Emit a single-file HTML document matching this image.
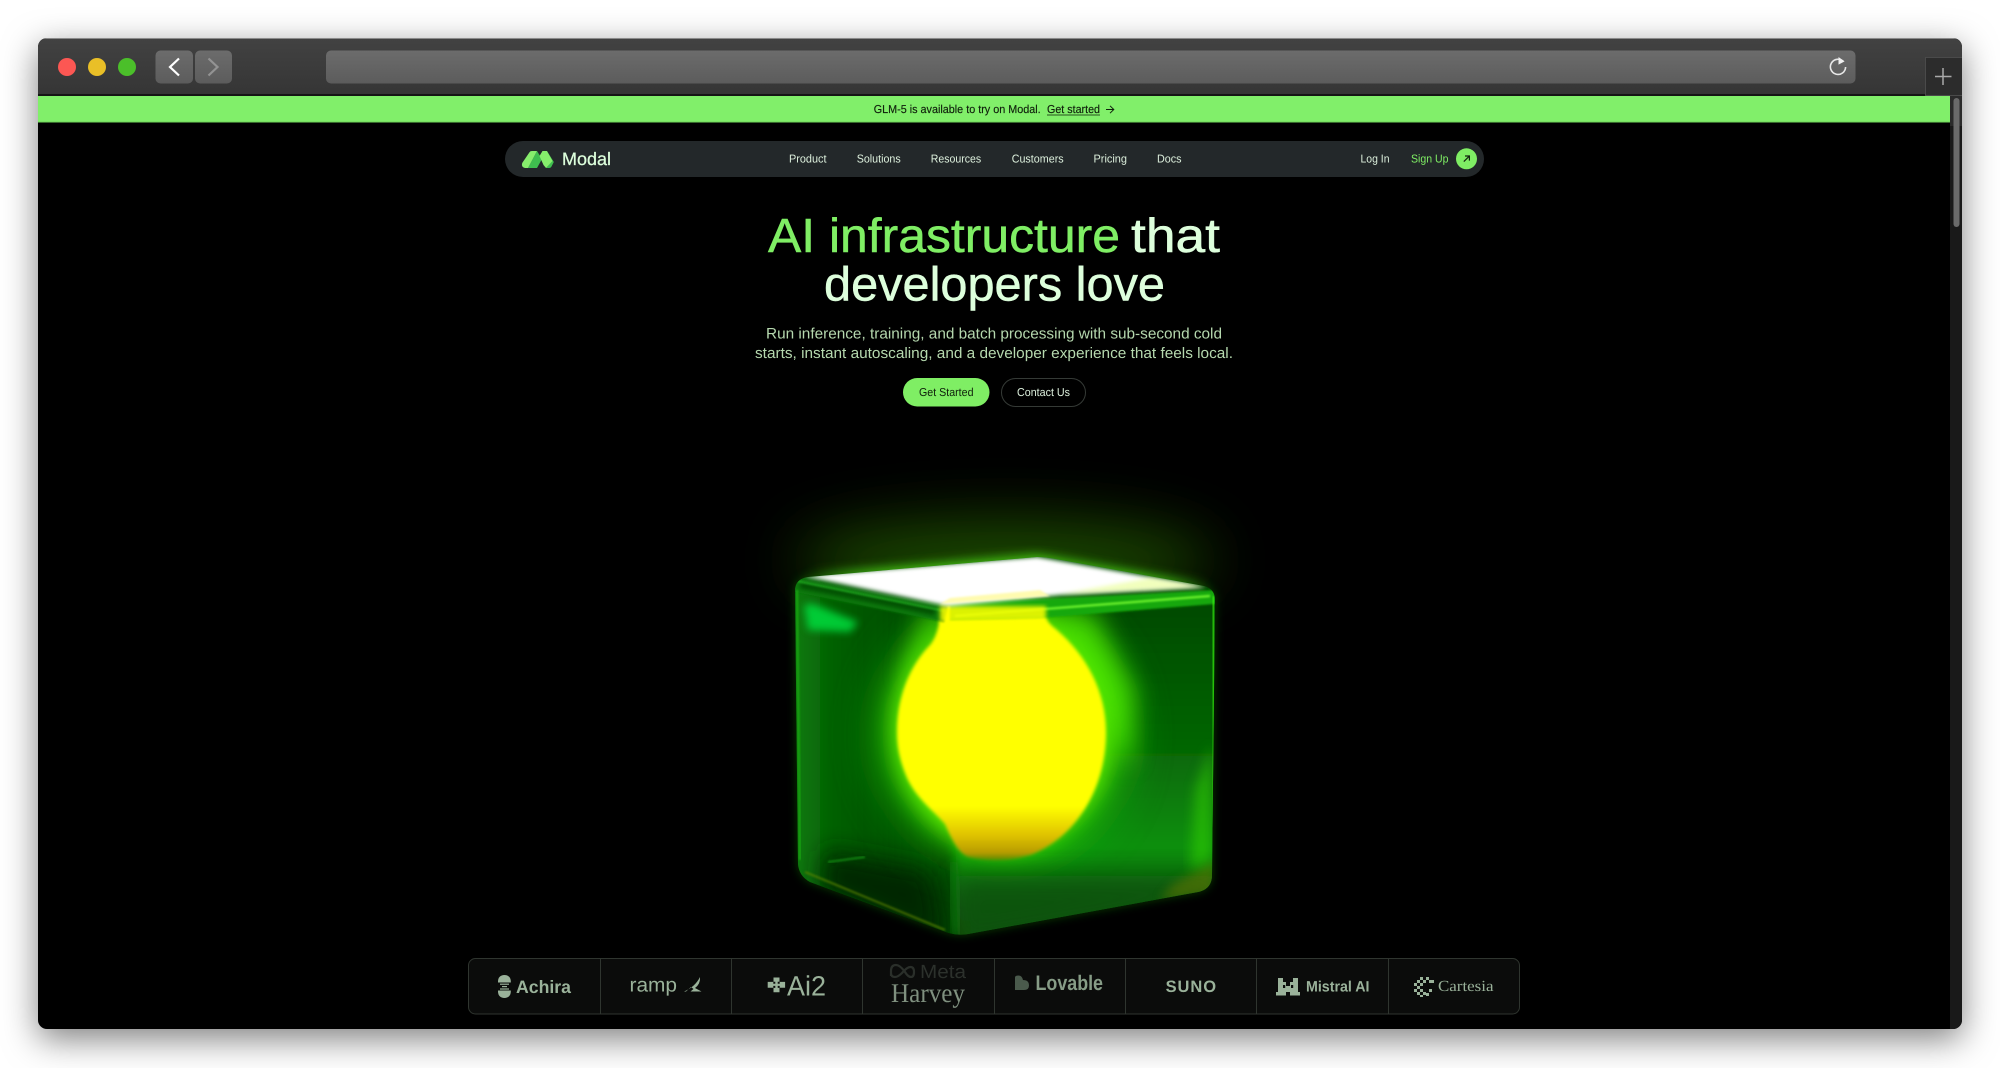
<!DOCTYPE html>
<html lang="en">
<head>
<meta charset="utf-8">
<title>Modal</title>
<style>
html,body{margin:0;padding:0;width:2000px;height:1068px;overflow:hidden;background:#fff}
#win{position:absolute;left:38px;top:38px;width:1924px;height:991px;border-radius:9px;background:#000;box-shadow:0 10px 34px rgba(0,0,0,.5)}
svg{position:absolute;left:0;top:0}
text{font-family:"Liberation Sans",sans-serif;text-rendering:geometricPrecision}
.serif{font-family:"Liberation Serif",serif}
</style>
</head>
<body>
<div id="win"></div>
<svg width="2000" height="1068" viewBox="0 0 2000 1068" xmlns="http://www.w3.org/2000/svg">
<defs>
<clipPath id="winclip"><rect x="38" y="38" width="1924" height="991" rx="9"/></clipPath>
<clipPath id="cube"><path id="sil" d="M795,591Q795,579 808,577L1037,557Q1046,557 1056,559L1204,586Q1215,589 1215,600L1212,875Q1212,889 1198,892L968,934Q957,936 946,932L810,882Q799,876 798,864Z"/></clipPath>
<linearGradient id="bar" x1="0" y1="0" x2="0" y2="1"><stop offset="0" stop-color="#424242"/><stop offset="1" stop-color="#353535"/></linearGradient>
<linearGradient id="btn" x1="0" y1="0" x2="0" y2="1"><stop offset="0" stop-color="#6c6c6c"/><stop offset="1" stop-color="#5c5c5c"/></linearGradient>
<linearGradient id="lf" x1="0" y1="0" x2="1" y2="0"><stop offset="0" stop-color="#0b840b"/><stop offset=".3" stop-color="#056005"/><stop offset="1" stop-color="#033c03"/></linearGradient>
<linearGradient id="rf" x1="0" y1="0" x2="0" y2="1"><stop offset="0" stop-color="#034603"/><stop offset=".45" stop-color="#066606"/><stop offset=".72" stop-color="#0f900b"/><stop offset=".88" stop-color="#095c07"/><stop offset="1" stop-color="#064a06"/></linearGradient>
<linearGradient id="yel" x1="0" y1="0" x2="0" y2="1"><stop offset="0" stop-color="#ffff00"/><stop offset=".79" stop-color="#ffff00"/><stop offset=".9" stop-color="#e0c400"/><stop offset=".97" stop-color="#b89c00"/><stop offset="1" stop-color="#5a8a00"/></linearGradient>
<filter id="b1" x="-20%" y="-20%" width="140%" height="140%"><feGaussianBlur stdDeviation="1"/></filter>
<filter id="b15" x="-20%" y="-20%" width="140%" height="140%"><feGaussianBlur stdDeviation="1.6"/></filter>
<filter id="b2" x="-20%" y="-20%" width="140%" height="140%"><feGaussianBlur stdDeviation="2.2"/></filter>
<filter id="b4" x="-30%" y="-60%" width="160%" height="220%"><feGaussianBlur stdDeviation="4"/></filter>
<filter id="b5" x="-40%" y="-40%" width="180%" height="180%"><feGaussianBlur stdDeviation="5"/></filter>
<filter id="b7" x="-30%" y="-30%" width="160%" height="160%"><feGaussianBlur stdDeviation="6"/></filter>
<filter id="b12" x="-60%" y="-60%" width="220%" height="220%"><feGaussianBlur stdDeviation="12"/></filter>
<filter id="b25" x="-80%" y="-80%" width="260%" height="260%"><feGaussianBlur stdDeviation="25"/></filter>
<filter id="b35" x="-80%" y="-150%" width="260%" height="400%"><feGaussianBlur stdDeviation="30"/></filter>
</defs>

<g clip-path="url(#winclip)">
<!-- toolbar -->
<rect x="38" y="38" width="1924" height="57" fill="url(#bar)"/>
<rect x="38" y="38" width="1924" height="1" fill="#8b8b8b"/>
<rect x="38" y="94" width="1924" height="2" fill="#151515"/>
<circle cx="67" cy="67" r="9" fill="#fc5753"/>
<circle cx="97" cy="67" r="9" fill="#e9bf27"/>
<circle cx="127" cy="67" r="9" fill="#4bbf2a"/>
<rect x="155.5" y="50.5" width="37.5" height="33" rx="5" fill="url(#btn)"/>
<rect x="195" y="50.5" width="37" height="33" rx="5" fill="url(#btn)"/>
<path d="M179,58.5L170,67L179,75.5" fill="none" stroke="#fff" stroke-width="2.2"/>
<path d="M208.5,58.5L217.5,67L208.5,75.5" fill="none" stroke="#939393" stroke-width="2.2"/>
<rect x="326" y="50.5" width="1529.5" height="33" rx="5" fill="url(#btn)"/>
<path d="M1843.5,61.6A7.6,7.6 0 1 0 1845.6,67" fill="none" stroke="#e6e6e6" stroke-width="1.6"/>
<path d="M1838.5,57L1844.6,61.4L1838.5,64.6Z" fill="#f0f0f0"/>
<rect x="1925.5" y="57.5" width="37" height="38" fill="#2c2c2c" stroke="#4a4a4a"/>
<path d="M1943,68V85M1935,76.5H1951.5" stroke="#a9a9a9" stroke-width="1.5" fill="none"/>

<!-- scrollbar -->
<rect x="1950" y="96" width="12" height="933" fill="#191919"/>
<rect x="1950" y="96" width="12" height="30" fill="#2a2a2a"/>
<rect x="1953.5" y="98" width="6" height="129" rx="3" fill="#6a6a6a"/>

<!-- banner -->
<rect x="38" y="96" width="1912" height="26.5" fill="#81ef6a"/>
<rect x="38" y="121.5" width="1912" height="1" fill="#6fd65a"/>
<text x="873.7" y="113" font-size="11.5" fill="#10200c" stroke="#10200c" stroke-width=".15" textLength="167" lengthAdjust="spacingAndGlyphs">GLM-5 is available to try on Modal.</text>
<text x="1047" y="113" font-size="11.5" fill="#10200c" stroke="#10200c" stroke-width=".15" textLength="53" lengthAdjust="spacingAndGlyphs">Get started</text>
<rect x="1047" y="114.5" width="53" height="1" fill="#28501f"/>
<path d="M1106,109.5H1113.5M1110,105.8L1113.8,109.5L1110,113.2" fill="none" stroke="#10200c" stroke-width="1"/>

<!-- nav -->
<rect x="505" y="141" width="979" height="36" rx="18" fill="#23282a"/>
<path d="M537,151L542,159L537,168H528Z" fill="#3fbe4f"/>
<path d="M522.2,163L529.5,152.2Q530.2,151 532,151H537L528,168H525Q521,167 522.2,163Z" fill="#86ee6c"/>
<path d="M547,151L553.8,162L551.5,166.5Q550.8,168 549,168H546L552,161Z" fill="#3fbe4f"/>
<path d="M539.5,156L542.5,151H547L552.5,161L546,168L543.5,165Z" fill="#86ee6c"/>
<text x="562" y="165" font-size="18" fill="#ddffdc" stroke="#ddffdc" stroke-width=".25" textLength="49" lengthAdjust="spacingAndGlyphs">Modal</text>
<g font-size="11.5" fill="#dcefdc">
<text x="789" y="162.5" textLength="37.5" lengthAdjust="spacingAndGlyphs">Product</text>
<text x="856.7" y="162.5" textLength="44" lengthAdjust="spacingAndGlyphs">Solutions</text>
<text x="930.7" y="162.5" textLength="50.5" lengthAdjust="spacingAndGlyphs">Resources</text>
<text x="1011.7" y="162.5" textLength="52" lengthAdjust="spacingAndGlyphs">Customers</text>
<text x="1093.5" y="162.5" textLength="33.5" lengthAdjust="spacingAndGlyphs">Pricing</text>
<text x="1157" y="162.5" textLength="24.5" lengthAdjust="spacingAndGlyphs">Docs</text>
<text x="1360.5" y="162.5" textLength="29" lengthAdjust="spacingAndGlyphs">Log In</text>
<text x="1411" y="162.5" textLength="37.5" lengthAdjust="spacingAndGlyphs" fill="#7fee64">Sign Up</text>
</g>
<circle cx="1466.5" cy="158.8" r="10.5" fill="#7fee64"/>
<path d="M1463.8,161.6L1469,156.4M1465,156H1469.4V160.6" fill="none" stroke="#13240f" stroke-width="1.2"/>

<!-- hero -->
<text x="768" y="252" font-size="48" fill="#7fee64" stroke="#7fee64" stroke-width=".5" textLength="352" lengthAdjust="spacingAndGlyphs">AI infrastructure</text>
<text x="1131" y="252" font-size="48" fill="#ddffdc" stroke="#ddffdc" stroke-width=".5" textLength="89" lengthAdjust="spacingAndGlyphs">that</text>
<text x="824" y="300.5" font-size="48" fill="#ddffdc" stroke="#ddffdc" stroke-width=".5" textLength="341" lengthAdjust="spacingAndGlyphs">developers love</text>
<text x="766" y="338.5" font-size="15.2" fill="#b5d8ae" textLength="456" lengthAdjust="spacingAndGlyphs">Run inference, training, and batch processing with sub-second cold</text>
<text x="755" y="358" font-size="15.2" fill="#b5d8ae" textLength="478" lengthAdjust="spacingAndGlyphs">starts, instant autoscaling, and a developer experience that feels local.</text>
<rect x="903" y="378" width="86.5" height="28.5" rx="14.2" fill="#7fee64"/>
<text x="919" y="396" font-size="11.5" fill="#10200c" textLength="54.5" lengthAdjust="spacingAndGlyphs">Get Started</text>
<rect x="1001.5" y="378.5" width="84" height="28" rx="14" fill="none" stroke="#353a36"/>
<text x="1017" y="396" font-size="11.5" fill="#dcefdc" textLength="53" lengthAdjust="spacingAndGlyphs">Contact Us</text>

<!-- cube glow -->
<ellipse cx="1005" cy="560" rx="210" ry="40" fill="#2f7a00" opacity=".6" filter="url(#b35)"/>
<path d="M805,576L1037,556L1208,586L1040,590Z" fill="#66ff22" opacity=".8" filter="url(#b7)"/>
<use href="#sil" fill="#12a80e" opacity=".35" filter="url(#b5)"/>

<!-- cube body -->
<g clip-path="url(#cube)">
<rect x="780" y="545" width="450" height="400" fill="#045004"/>
<g filter="url(#b5)">
<path d="M780,570L950,606L958,950L780,880Z" fill="url(#lf)"/>
<path d="M950,606L1230,585L1230,900L958,950Z" fill="url(#rf)"/>
</g>

<!-- dark corners -->
<path d="M825,850L930,870L945,945L820,890Z" fill="#022602" filter="url(#b12)"/>

<!-- green halo -->
<ellipse cx="1002" cy="735" rx="120" ry="125" fill="#1ec400" opacity=".9" filter="url(#b25)"/>
<ellipse cx="1003" cy="728" rx="110" ry="122" fill="#66f200" filter="url(#b12)"/>
<path d="M1045,612L1095,612L1135,690L1130,770L1090,700Z" fill="#4ee800" opacity=".75" filter="url(#b12)"/>
<path d="M920,612L950,610L935,680L905,680Z" fill="#3ecc00" opacity=".7" filter="url(#b12)"/>

<!-- lower band -->
<path d="M955,876H1220V900L958,945Z" fill="#075207" opacity=".85" filter="url(#b12)"/>
<path d="M1172,885L1215,860V895L1160,900Z" fill="#6f7a00" opacity=".5" filter="url(#b5)"/>
<path d="M1195,790L1212,745V860L1190,870Z" fill="#38dc00" opacity=".5" filter="url(#b7)"/>

<!-- yellow drop -->
<path d="M940,606H1040Q1044,618 1052,626C1085,652 1106,690 1106,732C1106,790 1075,838 1030,855Q1000,864 968,857C958,852 952,840 945,824C935,812 918,800 908,780C900,762 897,748 897,732C897,690 915,660 930,645C938,635 940,622 940,606Z" fill="url(#yel)" filter="url(#b15)"/>

<!-- rim shading -->
<path d="M795,578L948,606L944,622L795,592Z" fill="#0a7a0a" filter="url(#b1)"/>
<path d="M800,585L935,612" stroke="#034a03" stroke-width="7" filter="url(#b2)" fill="none" opacity=".85"/>
<path d="M797,581L945,611" stroke="#2cc82c" stroke-width="1.2" filter="url(#b1)" fill="none"/>
<path d="M950,604L1215,590L1215,604L1040,618L950,620Z" fill="#18a808" filter="url(#b1)"/>
<path d="M955,616L1210,596" stroke="#7cff30" stroke-width="2" filter="url(#b1)" fill="none"/>
<path d="M940,606H1046V620L940,622Z" fill="#ffff00" opacity=".85" filter="url(#b2)"/>

<!-- highlights -->
<path d="M804,606Q808,602 816,605L858,622L850,632L808,630Z" fill="#00d63a" opacity=".9" filter="url(#b4)"/>
<path d="M1213,596L1214,880" stroke="#40ff10" stroke-width="2.5" filter="url(#b1)" fill="none" opacity=".85"/>
<path d="M797,590L800,860" stroke="#28d818" stroke-width="1.6" filter="url(#b1)" fill="none" opacity=".7"/>
<path d="M805,872L945,930" stroke="#5a8400" stroke-width="1.8" filter="url(#b1)" fill="none" opacity=".85"/>
<path d="M828,862L865,857" stroke="#1eb01e" stroke-width="1.2" filter="url(#b1)" fill="none"/>
<path d="M952,862L958,935" stroke="#0f8a0c" stroke-width="12" filter="url(#b7)" fill="none" opacity=".6"/>

<!-- top face -->
<path d="M804,576L1037,557L1206,587L1060,595L948,606Z" fill="#ffffff" filter="url(#b2)"/>
<path d="M1060,594L1206,587L1150,578Z" fill="#e8ff90" opacity=".6" filter="url(#b2)"/>
<path d="M940,604L1050,596L1040,590L950,598Z" fill="#fffbb0" filter="url(#b1)"/>
</g>

<!-- logos -->
<rect x="468.5" y="958.5" width="1051" height="55.5" rx="7" fill="#0b0c0b" stroke="#2f352f"/>
<path d="M600.5,958.5V1014M731.5,958.5V1014M862.5,958.5V1014M994.5,958.5V1014M1125.5,958.5V1014M1256.5,958.5V1014M1388.5,958.5V1014" stroke="#2f352f" fill="none"/>

<g fill="#9ab29a">
<!-- Achira -->
<path d="M498,981.5C498,977.5 500.5,975 504.4,975C508.3,975 510.8,977.5 510.8,981.5V982.5H498Z"/>
<path d="M498,990.5H510.8V991.5C510.8,995.5 508.3,998 504.4,998C500.5,998 498,995.5 498,991.5Z"/>
<rect x="500" y="983.6" width="9" height="1.2"/><rect x="502" y="986" width="5" height="1.2"/><rect x="500" y="988.4" width="9" height="1.2"/>
<text x="516" y="993" font-size="18" font-weight="700" textLength="55" lengthAdjust="spacingAndGlyphs">Achira</text>
<!-- ramp -->
<text x="629.5" y="991.5" font-size="20" textLength="47.5" lengthAdjust="spacingAndGlyphs">ramp</text>
<path d="M700,977Q700.5,984 695,988L701.5,991.5H690.5L693.5,989L691,987L686,991.5H684Q695,987 700,977Z"/>
<!-- Ai2 -->
<path d="M773.5,977.5h6v4.2h-1.8v2h2v-1.8h5.4v5.8h-5.4v-1.8h-2v2h1.8v4.4h-6v-4.4h1.8v-2h-2v1.8h-5.6v-5.8h5.6v1.8h2v-2h-1.8Z"/>
<text x="787" y="995.7" font-size="28" textLength="39" lengthAdjust="spacingAndGlyphs">Ai2</text>
<!-- Harvey -->
<text class="serif" x="891" y="1002" font-size="27" fill="#7f907f" textLength="74" lengthAdjust="spacingAndGlyphs">Harvey</text>
<!-- Lovable -->
<path d="M1015,977.5Q1015,975.5 1018.5,975.5Q1022,975.5 1023,980Q1029,980 1029,985.5Q1029,990 1024,990H1015Z" fill="#4a5a4c"/>
<text x="1035.5" y="990" font-size="21" font-weight="700" fill="#869c86" textLength="67.5" lengthAdjust="spacingAndGlyphs">Lovable</text>
<!-- SUNO -->
<text x="1165.6" y="992" font-size="16.5" font-weight="700" textLength="50.5" lengthAdjust="spacing">SUNO</text>
<!-- Mistral -->
<path d="M1278,978H1283V982H1286V986H1290V982H1293V978H1298V992H1300V995.5H1290V992H1286V995.5H1276V992H1278Z"/>
<rect x="1283" y="985" width="2.2" height="3" fill="#0b0c0b"/><rect x="1291" y="985" width="2.2" height="3" fill="#0b0c0b"/>
<text x="1306" y="991.7" font-size="15" font-weight="700" textLength="63.5" lengthAdjust="spacingAndGlyphs">Mistral AI</text>
<!-- Cartesia -->
<path d="M1420,977h3v3h-3zM1426,977h3v3h-3zM1429,980h3v3h-3zM1417,980h3v3h-3zM1423,980h3v3h-3zM1414,983h3v3h-3zM1420,983h3v3h-3zM1417,986h3v3h-3zM1414,989h3v3h-3zM1420,989h3v3h-3zM1417,992h3v3h-3zM1423,992h3v3h-3zM1429,989h3v3h-3zM1426,993h3v3h-3zM1420,995h3v2h-3zM1432,980h2v3h-2z"/>
<text class="serif" x="1438" y="991" font-size="15.5" textLength="55.5" lengthAdjust="spacingAndGlyphs">Cartesia</text>
</g>
<!-- Meta -->
<path d="M892,976V971Q892,965 897,965Q901,965 906,972Q909,977 912,977Q915,977 915,972Q915,967 911.5,967Q908,967 903,973Q899,977 896,977Q892,977 892,973Z" fill="none" stroke="#2a2f2a" stroke-width="2.2" transform="translate(-1,0)"/>
<text x="920" y="978" font-size="19" fill="#2c312c" textLength="46" lengthAdjust="spacingAndGlyphs">Meta</text>
</g>
</svg>
</body>
</html>
